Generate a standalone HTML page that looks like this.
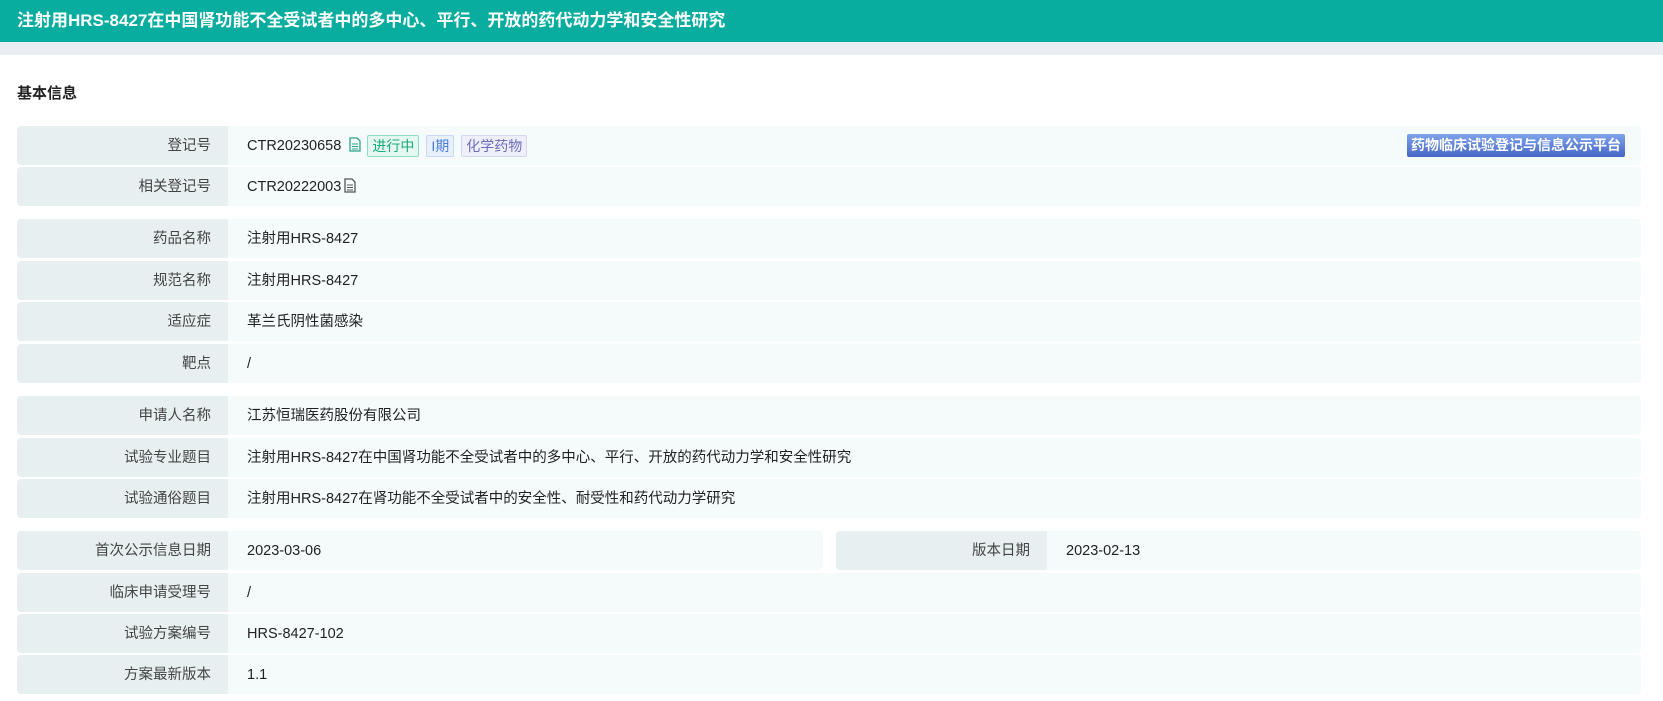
<!DOCTYPE html>
<html><head><meta charset="utf-8"><style>
*{margin:0;padding:0;box-sizing:border-box}
body{width:1663px;height:701px;overflow:hidden;background:#fff;font-family:"Liberation Sans","Noto Sans CJK SC",sans-serif;color:#333}
.hd{height:42px;background:#08ad9f;color:#fff;font-weight:bold;font-size:17px;line-height:42px;padding-left:17px}
.wrap{position:absolute;top:42px;left:0;width:1663px;height:13px;background:#e9eef5}
.card{position:absolute;top:55px;left:0;width:1663px;height:646px;background:#fff;border-top-right-radius:8px}
h3{position:absolute;left:17px;top:82px;font-size:15px;font-weight:bold;color:#222}
.row{position:absolute;left:17px;width:1624px;height:39px;display:flex;font-size:14.5px;line-height:41px}
.l{width:211px;background:#e8eff0;text-align:right;padding-right:17px;color:#444;border-radius:4px 0 0 4px}
.v{flex:1;background:#f5fbfb;padding-left:19px;color:#222;position:relative;border-radius:0 4px 4px 0}
.tag{display:inline-block;height:22px;line-height:20px;padding:0 4px;border:1px solid;border-radius:2px;font-size:14px;vertical-align:middle;margin-left:3px}
.doc{display:inline-block;vertical-align:middle;margin:0 3px 0 8px;position:relative;top:-2px}
.btn{position:absolute;right:16px;top:8px;height:23px;line-height:22px;padding:0 4px;color:#fff;font-weight:bold;font-size:14px;background:linear-gradient(#7ea3ec,#4666c4);border-radius:2px}
</style></head><body>
<div class="hd">注射用HRS-8427在中国肾功能不全受试者中的多中心、平行、开放的药代动力学和安全性研究</div>
<div class="wrap"></div>
<div class="card"></div>
<h3>基本信息</h3>

<div class="row" style="top:126px"><div class="l">登记号</div><div class="v">CTR20230658<svg class="doc" width="12" height="15" viewBox="0 0 12 15"><path d="M1 1h7l3 3v10H1z" fill="none" stroke="#2aa58a" stroke-width="1.3"/><path d="M3 7h6M3 9.5h6M3 12h6" stroke="#2aa58a" stroke-width="1"/></svg><span class="tag" style="background:#e4f7f0;border-color:#8fdcc5;color:#1aa97c">进行中</span> <span class="tag" style="background:#e8f0fe;border-color:#c8d8f6;color:#4a7ce0">I期</span> <span class="tag" style="background:#eeeffa;border-color:#d6d6ef;color:#6c6cb8">化学药物</span><span class="btn">药物临床试验登记与信息公示平台</span></div></div>
<div class="row" style="top:167px"><div class="l">相关登记号</div><div class="v">CTR20222003<svg class="doc" style="margin-left:3px" width="12" height="15" viewBox="0 0 12 15"><path d="M1 1h7l3 3v10H1z" fill="none" stroke="#555" stroke-width="1.3"/><path d="M3 7h6M3 9.5h6M3 12h6" stroke="#555" stroke-width="1"/></svg></div></div>

<div class="row" style="top:219px"><div class="l">药品名称</div><div class="v">注射用HRS-8427</div></div>
<div class="row" style="top:261px"><div class="l">规范名称</div><div class="v">注射用HRS-8427</div></div>
<div class="row" style="top:302px"><div class="l">适应症</div><div class="v">革兰氏阴性菌感染</div></div>
<div class="row" style="top:344px"><div class="l">靶点</div><div class="v">/</div></div>

<div class="row" style="top:396px"><div class="l">申请人名称</div><div class="v">江苏恒瑞医药股份有限公司</div></div>
<div class="row" style="top:438px"><div class="l">试验专业题目</div><div class="v">注射用HRS-8427在中国肾功能不全受试者中的多中心、平行、开放的药代动力学和安全性研究</div></div>
<div class="row" style="top:479px"><div class="l">试验通俗题目</div><div class="v">注射用HRS-8427在肾功能不全受试者中的安全性、耐受性和药代动力学研究</div></div>

<div class="row" style="top:531px;width:806px"><div class="l">首次公示信息日期</div><div class="v">2023-03-06</div></div>
<div class="row" style="top:531px;left:836px;width:805px"><div class="l">版本日期</div><div class="v">2023-02-13</div></div>
<div class="row" style="top:573px"><div class="l">临床申请受理号</div><div class="v">/</div></div>
<div class="row" style="top:614px"><div class="l">试验方案编号</div><div class="v">HRS-8427-102</div></div>
<div class="row" style="top:655px"><div class="l">方案最新版本</div><div class="v">1.1</div></div>
</body></html>
